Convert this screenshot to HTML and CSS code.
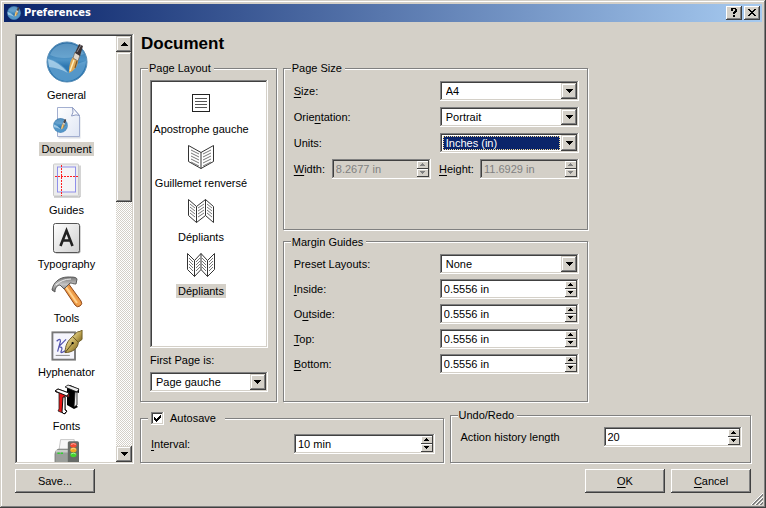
FILE: index.html
```html
<!DOCTYPE html>
<html lang="en">
<head>
<meta charset="utf-8">
<title>Preferences</title>
<link rel="stylesheet" href="styles.css">
</head>
<body>
<svg class="defs" aria-hidden="true">
  <defs>
    <linearGradient id="ball" x1="0" y1="0" x2="0" y2="1"><stop offset="0" stop-color="#2a6ca3"/><stop offset=".45" stop-color="#4f94c6"/><stop offset=".6" stop-color="#2e78b2"/><stop offset="1" stop-color="#2573ae"/></linearGradient>
    <linearGradient id="paper" x1="0" y1="0" x2="1" y2="1"><stop offset="0" stop-color="#fff"/><stop offset="1" stop-color="#dfe6f4"/></linearGradient>
    <linearGradient id="key" x1="0" y1="0" x2="1" y2="1"><stop offset="0" stop-color="#fff"/><stop offset="1" stop-color="#cfcfcf"/></linearGradient>
    <linearGradient id="wood" x1="0" y1="1" x2="1" y2="0"><stop offset="0" stop-color="#c8661a"/><stop offset=".5" stop-color="#f6a650"/><stop offset="1" stop-color="#b04f10"/></linearGradient>
    <linearGradient id="steel" x1="0" y1="0" x2="0" y2="1"><stop offset="0" stop-color="#777"/><stop offset=".5" stop-color="#c4c4c4"/><stop offset="1" stop-color="#666"/></linearGradient>
    <linearGradient id="gold" x1="0" y1="0" x2="1" y2="1"><stop offset="0" stop-color="#f5eaa8"/><stop offset=".6" stop-color="#b79d4b"/><stop offset="1" stop-color="#6e5c22"/></linearGradient>
    <symbol id="globe" viewBox="0 0 42 42">
      <circle cx="21" cy="21" r="20" fill="url(#ball)" stroke="#5b8fb8"/>
      <path d="M4 14C7 6 14 2.500 21 2.500S35 6 38 13C28 17 14 19 4 14Z" fill="#8fbfe0" opacity=".45"/>
      <path d="M2 18C10 19 18 25 22 31C25 27 31 22 40 20C39 34 29 40 21 40C10 40 2 31 2 18Z" fill="#78b3dd" opacity=".55"/>
      <path d="M2 18Q13 21 22 32Q13 27 3 26Z" fill="#c2e0f3" opacity=".65"/>
      <path d="M23 32C23 25 24 20 27 16L32 19C32 25 28 30 23 32Z" fill="#e0a955"/>
      <path d="M24 30L28 19" stroke="#fff0bd" stroke-width="1.500"/>
      <path d="M29 27L31 20" stroke="#7d5526" stroke-width="1.200"/>
      <path d="M27 17L29 11L34 14L32 20Z" fill="#e1d9cd" stroke="#6f665c" stroke-width=".7"/>
      <path d="M29 12L33 3L37 5L34 15Z" fill="#3b3335"/>
      <path d="M31 11L35 4" stroke="#90898c"/>
    </symbol>
    <symbol id="tri-up" viewBox="0 0 7 4"><path d="M3 0h1v1h1v1h1v1h1v1H0V3h1V2h1V1h1z"/></symbol>
    <symbol id="tri-down" viewBox="0 0 7 4"><path d="M0 0h7v1H6v1H5v1H4v1H3V3H2V2H1V1H0z"/></symbol>
    <symbol id="spin-up" viewBox="0 0 5 3"><path d="M2 0h1v1h1v1h1v1H0V2h1V1h1z"/></symbol>
    <symbol id="spin-down" viewBox="0 0 5 3"><path d="M0 0h5v1H4v1H3v1H2V2H1V1H0z"/></symbol>
  </defs>
</svg>

<header class="titlebar">
  <svg class="app-icon"><use href="#globe"/></svg>
  <span class="title">Preferences</span>
  <button class="cap" type="button" aria-label="Help"><svg width="8" height="9" viewBox="0 0 8 9"><path d="M1 0h5v1h1v3H6v1H5v1H3V4h1V3h1V1H3v2H1zM3 7h2v2H3z"/></svg></button>
  <button class="cap" type="button" aria-label="Close"><svg width="8" height="7" viewBox="0 0 8 7"><path d="M0 0h2v1h1v1h2V1h1V0h2v1H7v1H6v1H5v1h1v1h1v1h1v1H6V6H5V5H3v1H2v1H0V6h1V5h1V4h1V3H2V2H1V1H0z"/></svg></button>
</header>

<form class="content">
  <div class="body-row">
    <nav class="sidebar sunken" aria-label="Sections">
      <ul class="sections">
        <li class="big"><svg class="pic" width="42" height="42"><use href="#globe"/></svg><span>General</span></li>
        <li class="current"><svg class="pic" width="32" height="32" viewBox="0 0 32 32"><path d="M6.500 1.500h15l7 8v21h-22z" fill="#b9c0cb" opacity=".5" transform="translate(1 1)"/><path d="M6.500 .500h15l7 8v21h-22z" fill="url(#paper)" stroke="#a3afd0"/><path d="M21.500 .500q1.500 5-1 8.500q5-2 8-.5z" fill="#f8f9fd" stroke="#8e9bc2"/><svg x="2" y="11" width="15" height="15"><use href="#globe"/></svg></svg><span>Document</span></li>
        <li class="tall"><svg class="pic" width="28" height="34" viewBox="0 0 28 34"><rect x=".5" y=".5" width="25" height="32" rx="1" fill="#ececec" stroke="#cacaca"/><path d="M1 33.500h26V2" fill="none" stroke="#aaa"/><rect x="4.500" y="3.500" width="18" height="25" fill="#f4f4f6" stroke="#8f8fea"/><path d="M8.500 1v31M2 12.500h23" stroke="#ff2020" stroke-dasharray="2 1" shape-rendering="crispEdges"/></svg><span>Guides</span></li>
        <li><svg class="pic" width="30" height="32" viewBox="0 0 30 32"><rect x="2.500" y="2.500" width="26" height="29" rx="2" fill="#aaa"/><rect x="1.500" y="1.500" width="26" height="29" rx="2" fill="url(#key)" stroke="#555"/><path d="M8.500 24L14.500 8.500L20.500 24M11 18.500h7" fill="none" stroke="#222" stroke-width="2.600"/></svg><span>Typography</span></li>
        <li><svg class="pic" width="32" height="32" viewBox="0 0 32 32"><path d="M12 11l5-4 13 18q2 3-1 5-3 2-5-1z" fill="url(#wood)" stroke="#8f481a"/><path d="M15 11L26 27" stroke="#ffd28f" stroke-width="2"/><path d="M1 14C2 7 8 1 17 1c5 0 8 0 9 2l-1 5c-3 0-4-1-6-1l-6 6-4-4c-3 0-5 3-5 7z" fill="url(#steel)" stroke="#5a5a5a"/><path d="M5 9Q11 3 20 3" fill="none" stroke="#eee"/></svg><span>Tools</span></li>
        <li><svg class="pic" width="34" height="34" viewBox="0 0 34 34"><rect x="1.500" y="2.500" width="24" height="29" fill="#f5f5fc" stroke="#777" stroke-width="2"/><path d="M6 12q4-4 4 0L7 23M8 18l8-8M9 18q4 0 2 4t4 0" fill="none" stroke="#5252ad" stroke-width="1.300"/><path d="M5 27h15" stroke="#888"/><path d="M15 24C15 16 18 11 23 7l6 6C29 20 22 24 15 24z" fill="url(#gold)" stroke="#67562a"/><path d="M23 7l5-5q3 0 5-2v10l-4 3z" fill="url(#gold)" stroke="#6e5c22"/><path d="M15 24l8-10" stroke="#4e421c"/><circle cx="23" cy="14" r="1.200"/></svg><span>Hyphenator</span></li>
        <li><svg class="pic" width="26" height="32" viewBox="0 0 26 32"><path d="M13 3l3-2 9 4v4l-3-1v13l2 2-4 2-7-4V7z"/><path d="M11 3l3-2 11 4-2 3zM21 8h2v13l-3 2z" fill="#eee" stroke="#111" stroke-width=".8"/><path d="M2 8l3 1v16l-1 2 7 3 2-3-2-2V12l4 1V9L4 5 1 7z" fill="#e81515" stroke="#222" stroke-width=".8"/><path d="M1 7l3-2 11 4-2 3zM9 13h2v13l2 1-3 3-2-2z" fill="#fff" stroke="#111"/></svg><span>Fonts</span></li>
        <li><svg class="pic" width="34" height="40" viewBox="0 0 34 40"><path d="M9 2h17v13H7z" fill="#f6f6f6" stroke="#bbb"/><path d="M2 20q1-6 5-6h20v22H2z" fill="#9b9f9b" stroke="#717571"/><path d="M3 15h20l-2 3H3z" fill="#c8ccc8"/><path d="M5 19h3M9 19h3" stroke="#2fcf2f" stroke-width="2"/><rect x="18" y="4" width="14" height="30" rx="2" fill="#676b67"/><ellipse cx="25" cy="9" rx="4" ry="3" fill="#f44a32"/><ellipse cx="25" cy="15" rx="4" ry="3" fill="#f3a820"/><ellipse cx="25" cy="21" rx="4" ry="3" fill="#43d32c"/><path d="M22 8q3-2 6 0M22 14q3-2 6 0M22 20q3-2 6 0" stroke="#fff" opacity=".7" fill="none"/></svg></li>
      </ul>
      <div class="scrollbar">
        <button class="raised" type="button" aria-label="Scroll up"><svg width="7" height="4"><use href="#tri-up"/></svg></button>
        <div class="thumb raised"></div>
        <div class="track"></div>
        <button class="raised" type="button" aria-label="Scroll down"><svg width="7" height="4"><use href="#tri-down"/></svg></button>
      </div>
    </nav>

    <main class="panel">
      <h1>Document</h1>
      <div class="top">
        <fieldset class="layout-group">
          <legend>Page Layout</legend>
          <ul class="layouts sunken">
            <li><svg class="pic" width="28" height="26" viewBox="0 0 28 26"><rect x="5.500" y="4.500" width="17" height="17" fill="#fff" stroke="#222"/><path d="M8 8.500h12M8 11.500h12M8 14.500h12M8 17.500h12" stroke="#555"/></svg><span>Apostrophe gauche</span></li>
            <li><svg class="pic" width="28" height="26" viewBox="0 0 28 26"><path d="M1.500 1.500L14 8.500 26.500 1.500V17.500L14 24.500 1.500 17.500zM14 8.500v16" fill="#fff" stroke="#333"/><path d="M4 6l8 4M4 9l8 4M4 12l8 4M4 15l8 4M4 18l8 4M24 6l-8 4M24 9l-8 4M24 12l-8 4M24 15l-8 4M24 18l-8 4" stroke="#777"/></svg><span>Guillemet renversé</span></li>
            <li><svg class="pic" width="28" height="26" viewBox="0 0 28 26"><path d="M1.500 1.500L9.500 8.500 18.500 1.500 26.500 8.500V24.500L18.500 17.500 9.500 24.500 1.500 17.500zM9.500 8.500v16M18.500 1.500v16" fill="#fff" stroke="#333"/><path d="M3 6l5 4M3 9l5 4M3 12l5 4M3 15l5 4M17 6l-6 4M17 9l-6 4M17 12l-6 4M17 15l-6 4M20 6l5 4M20 9l5 4M20 12l5 4M20 15l5 4" stroke="#777"/></svg><span>Dépliants</span></li>
            <li class="current"><svg class="pic" width="28" height="26" viewBox="0 0 28 26"><path d="M.500 1.500L7.500 8.500 14 1.500 20.500 8.500 27.500 1.500V17.500L20.500 24.500 14 17.500 7.500 24.500 .500 17.500zM7.500 8.500v16M14 1.500v16M20.500 8.500v16" fill="#fff" stroke="#333"/><path d="M2 6l4 4M2 9l4 4M2 12l4 4M2 15l4 4M13 6l-4 4M13 9l-4 4M13 12l-4 4M13 15l-4 4M15 6l4 4M15 9l4 4M15 12l4 4M15 15l4 4M26 6l-4 4M26 9l-4 4M26 12l-4 4M26 15l-4 4" stroke="#777"/></svg><span>Dépliants</span></li>
          </ul>
          <label for="first">First Page is:</label>
          <div class="combo sunken"><select id="first"><option>Page gauche</option></select><span class="drop raised"><svg width="7" height="4"><use href="#tri-down"/></svg></span></div>
        </fieldset>

        <fieldset class="size-group">
          <legend>Page Size</legend>
          <div class="row"><label for="size"><u>S</u>ize:</label><div class="combo sunken"><select id="size"><option>A4</option></select><span class="drop raised"><svg width="7" height="4"><use href="#tri-down"/></svg></span></div></div>
          <div class="row"><label for="orient">Orie<u>n</u>tation:</label><div class="combo sunken"><select id="orient"><option>Portrait</option></select><span class="drop raised"><svg width="7" height="4"><use href="#tri-down"/></svg></span></div></div>
          <div class="row"><label for="units">Units:</label><div class="combo sunken active"><select id="units"><option>Inches (in)</option></select><span class="drop raised"><svg width="7" height="4"><use href="#tri-down"/></svg></span></div></div>
          <div class="pair">
            <label for="width"><u>W</u>idth:</label>
            <div class="spin sunken off"><input id="width" type="text" value="8.2677 in" disabled><span class="steps"><button type="button" class="raised" aria-label="Increase" disabled><svg width="5" height="3"><use href="#spin-up"/></svg></button><button type="button" class="raised" aria-label="Decrease" disabled><svg width="5" height="3"><use href="#spin-down"/></svg></button></span></div>
            <label for="height"><u>H</u>eight:</label>
            <div class="spin sunken off"><input id="height" type="text" value="11.6929 in" disabled><span class="steps"><button type="button" class="raised" aria-label="Increase" disabled><svg width="5" height="3"><use href="#spin-up"/></svg></button><button type="button" class="raised" aria-label="Decrease" disabled><svg width="5" height="3"><use href="#spin-down"/></svg></button></span></div>
          </div>
        </fieldset>

        <fieldset class="margin-group">
          <legend>Margin Guides</legend>
          <div class="row"><label for="preset">Preset Layouts:</label><div class="combo sunken"><select id="preset"><option>None</option></select><span class="drop raised"><svg width="7" height="4"><use href="#tri-down"/></svg></span></div></div>
          <div class="row"><label for="inside"><u>I</u>nside:</label><div class="spin sunken"><input id="inside" type="text" value="0.5556 in"><span class="steps"><button type="button" class="raised" aria-label="Increase"><svg width="5" height="3"><use href="#spin-up"/></svg></button><button type="button" class="raised" aria-label="Decrease"><svg width="5" height="3"><use href="#spin-down"/></svg></button></span></div></div>
          <div class="row"><label for="outside">O<u>u</u>tside:</label><div class="spin sunken"><input id="outside" type="text" value="0.5556 in"><span class="steps"><button type="button" class="raised" aria-label="Increase"><svg width="5" height="3"><use href="#spin-up"/></svg></button><button type="button" class="raised" aria-label="Decrease"><svg width="5" height="3"><use href="#spin-down"/></svg></button></span></div></div>
          <div class="row"><label for="topm"><u>T</u>op:</label><div class="spin sunken"><input id="topm" type="text" value="0.5556 in"><span class="steps"><button type="button" class="raised" aria-label="Increase"><svg width="5" height="3"><use href="#spin-up"/></svg></button><button type="button" class="raised" aria-label="Decrease"><svg width="5" height="3"><use href="#spin-down"/></svg></button></span></div></div>
          <div class="row"><label for="bottomm"><u>B</u>ottom:</label><div class="spin sunken"><input id="bottomm" type="text" value="0.5556 in"><span class="steps"><button type="button" class="raised" aria-label="Increase"><svg width="5" height="3"><use href="#spin-up"/></svg></button><button type="button" class="raised" aria-label="Decrease"><svg width="5" height="3"><use href="#spin-down"/></svg></button></span></div></div>
        </fieldset>
      </div>

      <div class="bottom">
        <fieldset class="autosave-group">
          <legend><input id="autosave" type="checkbox" checked><label for="autosave">Autosave</label></legend>
          <div class="row"><label for="interval"><u>I</u>nterval:</label><div class="spin sunken"><input id="interval" type="text" value="10 min"><span class="steps"><button type="button" class="raised" aria-label="Increase"><svg width="5" height="3"><use href="#spin-up"/></svg></button><button type="button" class="raised" aria-label="Decrease"><svg width="5" height="3"><use href="#spin-down"/></svg></button></span></div></div>
        </fieldset>
        <fieldset class="undo-group">
          <legend>Undo/Redo</legend>
          <div class="row"><label for="history">Action history length</label><div class="spin sunken"><input id="history" type="text" value="20"><span class="steps"><button type="button" class="raised" aria-label="Increase"><svg width="5" height="3"><use href="#spin-up"/></svg></button><button type="button" class="raised" aria-label="Decrease"><svg width="5" height="3"><use href="#spin-down"/></svg></button></span></div></div>
        </fieldset>
      </div>
    </main>
  </div>

  <footer class="actions">
    <button class="push raised" type="button">Save...</button>
    <span class="spacer"></span>
    <button class="push raised" type="button"><span><u>O</u>K</span></button>
    <button class="push raised" type="button"><span><u>C</u>ancel</span></button>
  </footer>
</form>
<svg class="grip" width="12" height="12" viewBox="0 0 12 12" aria-hidden="true"><path d="M0 12L12 0M4 12L12 4M8 12L12 8" stroke="#fff"/><path d="M1 12L12 1M2 12L12 2M5 12L12 5M6 12L12 6M9 12L12 9M10 12L12 10" stroke="#808080"/></svg>
</body>
</html>
```
FILE: styles.css
```css
* { box-sizing: border-box; }

body {
  position: relative;
  display: flex;
  flex-direction: column;
  min-height: 100vh;
  margin: 0;
  padding: 4px;
  background: #d4d0c8;
  color: #000;
  font: 11px/14px "Liberation Sans", Arial, sans-serif;
  box-shadow: inset -1px -1px #404040, inset 1px 1px #d4d0c8, inset -2px -2px #808080, inset 2px 2px #fff;
}

.defs { position: absolute; width: 0; height: 0; }
button, input, select { margin: 0; padding: 0; border: 0; border-radius: 0; outline: 0; font: inherit; color: inherit; }
button { background: #d4d0c8; }
button svg, .drop svg { display: block; shape-rendering: crispEdges; }
ul { margin: 0; padding: 0; list-style: none; }
u { text-underline-offset: 2px; }

.raised {
  background: #d4d0c8;
  box-shadow: inset -1px -1px #404040, inset 1px 1px #d4d0c8, inset -2px -2px #808080, inset 2px 2px #fff;
}

.sunken {
  padding: 2px;
  background: #fff;
  box-shadow: inset -1px -1px #fff, inset 1px 1px #808080, inset -2px -2px #d4d0c8, inset 2px 2px #404040;
}

/* Title bar */
.titlebar {
  display: flex;
  align-items: center;
  height: 18px;
  padding: 0 2px;
  background: linear-gradient(to right, #0a246a, #a6caf0);
  color: #fff;
}
.app-icon { width: 14px; height: 14px; margin: 0 3px 0 1px; }
.title { flex: 1; font: bold 11px/14px "DejaVu Sans Condensed", "Open Sans", sans-serif; }
.cap {
  display: grid;
  place-items: center;
  width: 16px;
  height: 14px;
  padding: 0 1px 1px 0;
  box-shadow: inset -1px -1px #404040, inset 1px 1px #fff, inset -2px -2px #808080;
}
.cap + .cap { margin-left: 2px; }

/* Window body */
.content { flex: 1; display: flex; flex-direction: column; padding: 12px 11px 11px; }
.body-row { flex: 1; display: flex; gap: 6px; min-height: 0; }
.sidebar { display: flex; width: 119px; height: calc(100vh - 78px); }
.sections { flex: 1; overflow: hidden; padding-top: 3px; }
.sections li, .layouts li { display: flex; flex-direction: column; align-items: center; gap: 3px; height: 54px; }
.sections .pic { flex: none; height: 32px; }
.sections .big { height: 68px; }
.sections .big .pic { height: 46px; }
.sections .tall { height: 61px; }
.sections .tall .pic { height: 39px; }
.sections span, .layouts span { padding: 0 2px; white-space: nowrap; }
.current span { background: #d4d0c8; }

.scrollbar { display: flex; flex-direction: column; width: 16px; }
.scrollbar button { display: grid; place-items: center; height: 16px; }
.thumb { height: 150px; }
.track { flex: 1; background: repeating-conic-gradient(#fff 0 25%, #d4d0c8 0 50%) 0 0 / 2px 2px; }

/* Settings panel */
.panel { flex: 1; display: flex; flex-direction: column; min-width: 0; padding-bottom: 1px; }
h1 { margin: 0 0 7px; padding-left: 1px; font-size: 17px; line-height: 20px; }
.top {
  flex: 1;
  display: grid;
  grid-template-columns: 137fr 306fr 157fr;
  grid-template-rows: 168fr 167fr;
  gap: 5px 6px;
}
.layout-group { grid-row: 1 / 3; }
.size-group, .margin-group { grid-column: 2; }
.bottom { display: grid; grid-template-columns: 303fr 301fr; gap: 6px; margin-top: 6px; }

fieldset {
  min-width: 0;
  margin: 0;
  padding: 5px 8px 9px 9px;
  border: 1px solid #808080;
  box-shadow: inset 1px 1px #fff, 1px 1px #fff;
}
legend { margin-left: -2px; padding: 0 3px 0 1px; background: #d4d0c8; }
.layout-group { display: flex; flex-direction: column; }
.layouts { flex: 1; padding-top: 6px; }
.layouts li { width: 98px; gap: 3px; padding-top: 1px; }
.layouts .pic { flex: none; height: 32px; }
.layout-group label { margin: 5px 0; }

.row { display: grid; grid-template-columns: 146px 1fr; align-items: center; padding-left: 1px; }
.row + .row { margin-top: 5px; }
.size-group { padding-top: 6px; }
.size-group .row + .row, .pair { margin-top: 6px; }
.pair { display: grid; grid-template-columns: 38px 1fr 49px 1fr; align-items: center; padding-left: 1px; }
.pair label { white-space: nowrap; }
.pair .spin + label { padding-left: 8px; }
.bottom fieldset { padding-bottom: 10px; }
.autosave-group { margin-top: 3px; }
.bottom .autosave-group { padding-top: 9px; padding-bottom: 8px; }
.autosave-group legend { display: flex; align-items: center; gap: 6px; padding: 0 9px 0 3px; }
.autosave-group .row { grid-template-columns: 143px 1fr; }
.undo-group .row { grid-template-columns: 143px 1fr; }

.combo, .spin { display: flex; height: 20px; min-width: 0; }
.combo select, .spin input { flex: 1; width: 0; min-width: 0; background: transparent; appearance: none; }
.combo select { padding-left: 4px; }
.drop { display: grid; place-items: center; width: 16px; pointer-events: none; }
.active select { margin: 1px; padding-left: 2px; border: 1px dotted #f5db95; background: #0a246a; color: #fff; line-height: 12px; }
.spin input { padding-left: 2px; }
.steps { display: flex; flex-direction: column; width: 12px; }
.steps button {
  flex: 1;
  display: grid;
  place-items: center;
  padding: 0 1px 1px 0;
  box-shadow: inset -1px -1px #404040, inset 1px 1px #fff;
}
.off { background: #d4d0c8; color: #808080; fill: #808080; }

#autosave {
  appearance: none;
  width: 13px;
  height: 13px;
  background:
    linear-gradient(#000, #000) 3px 5px / 1px 3px no-repeat,
    linear-gradient(#000, #000) 4px 6px / 1px 3px no-repeat,
    linear-gradient(#000, #000) 5px 7px / 1px 3px no-repeat,
    linear-gradient(#000, #000) 6px 6px / 1px 3px no-repeat,
    linear-gradient(#000, #000) 7px 5px / 1px 3px no-repeat,
    linear-gradient(#000, #000) 8px 4px / 1px 3px no-repeat,
    linear-gradient(#000, #000) 9px 3px / 1px 3px no-repeat,
    #fff;
  box-shadow: inset -1px -1px #fff, inset 1px 1px #808080, inset -2px -2px #d4d0c8, inset 2px 2px #404040;
}

/* Buttons */
.actions { display: flex; gap: 6px; margin-top: 5px; }
.spacer { flex: 1; }
.push { width: 80px; height: 24px; box-shadow: inset -1px -1px #404040, inset 1px 1px #fff, inset -2px -2px #808080; }
.grip { position: absolute; right: 3px; bottom: 3px; }
```
